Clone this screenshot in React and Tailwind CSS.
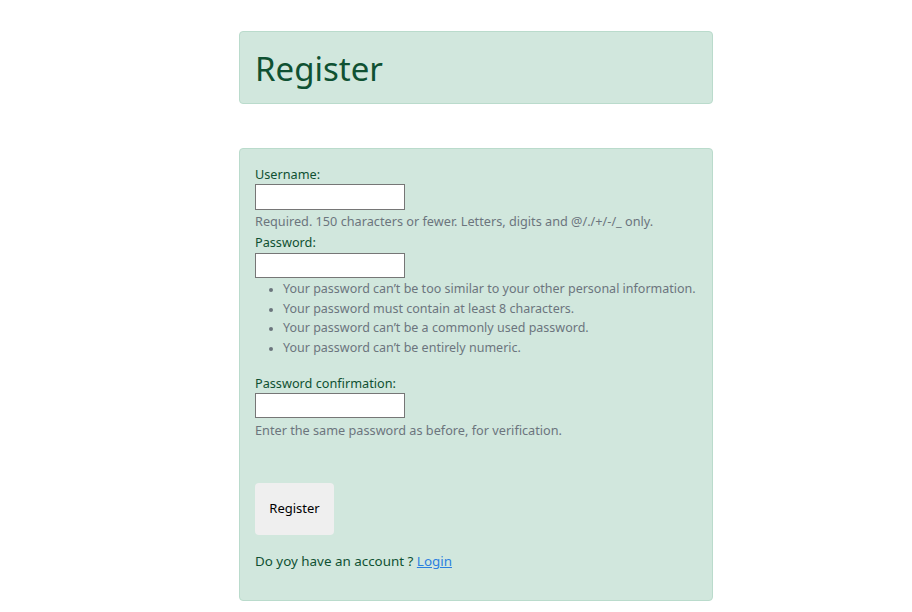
export default function App() {
  const rules = [
    "Your password can’t be too similar to your other personal information.",
    'Your password must contain at least 8 characters.',
    'Your password can’t be a commonly used password.',
    'Your password can’t be entirely numeric.',
  ]

  return (
    <div className="min-h-screen bg-white font-['Noto_Sans',sans-serif] text-[#0f5132]">
      <div className="ml-[239px] w-[474px] pt-[31px]">
        <div className="flex h-[73px] items-center rounded border border-[#badbcc] bg-[#d1e7dd] px-[15px]">
          <h1 className="mt-[2px] text-[33px] leading-none text-[#0f5132]">Register</h1>
        </div>

        <form className="mt-[44px] rounded border border-[#badbcc] bg-[#d1e7dd] px-[15px] pb-[29px] pt-[15px] text-[12.7px]">
          <label className="block leading-5">Username:</label>
          <input className="block h-[26px] w-[150px] border border-[#767676] bg-white" />
          <div className="mt-[1px] leading-5 text-[#6c757d]">
            Required. 150 characters or fewer. Letters, digits and @/./+/-/_ only.
          </div>

          <label className="mt-[1px] block leading-5">Password:</label>
          <input
            type="password"
            className="mt-[1px] block h-[25px] w-[150px] border border-[#767676] bg-white"
          />
          <ul className="mb-4 mt-[1px] list-disc pl-[28px] text-[12.5px] text-[#6c757d] marker:text-[10px]">
            {rules.map((r) => (
              <li key={r} className="whitespace-nowrap leading-[19.5px]">
                {r}
              </li>
            ))}
          </ul>

          <label className="block leading-5">Password confirmation:</label>
          <input
            type="password"
            className="block h-[25px] w-[150px] border border-[#767676] bg-white"
          />
          <div className="mt-[2px] leading-5 text-[#6c757d]">
            Enter the same password as before, for verification.
          </div>

          <button
            type="button"
            className="mt-[43px] block h-[52px] w-[79px] rounded bg-[#efefef] text-[13px] text-black"
          >
            Register
          </button>

          <p className="mt-4 text-[13.4px] leading-5">
            Do yoy have an account ?{' '}
            <a href="#" className="text-[#2b7fe0] underline">
              Login
            </a>
          </p>
        </form>
      </div>
    </div>
  )
}
